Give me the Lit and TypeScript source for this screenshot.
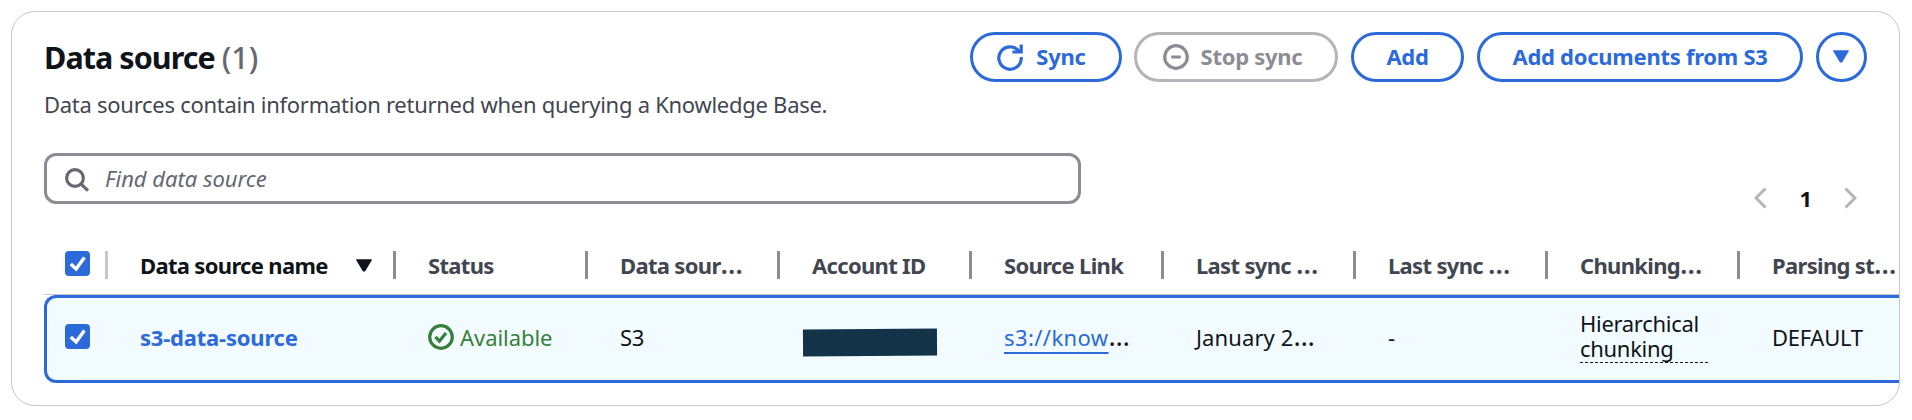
import { LitElement, html, css, svg, nothing } from "lit";
import { customElement, property } from "lit/decorators.js";

const shapes: Record<string, unknown> = {
  sync: svg`<path d="M22.6 8.2A11.2 11.2 0 1 0 24.2 13" /><path d="M24.2 .5V8h-8.8" />`,
  stop: svg`<circle cx="13" cy="13" r="11.3" /><path d="M8.2 13h9.6" />`,
  search: svg`<circle cx="10" cy="10" r="8.4" /><path d="M15.8 15.8l7.2 6.8" />`,
  ok: svg`<circle cx="13" cy="13" r="11.3" /><path d="M7.4 12.8l4 4.2 6.6-8" />`,
};

@customElement("ds-icon")
export class DsIcon extends LitElement {
  static styles = css`
    :host { display: block; flex: none; width: 26px; height: 26px; }
    svg { display: block; fill: none; stroke: currentColor; stroke-width: 3.2; overflow: visible; }
  `;
  @property() name = "";
  render() {
    return html`<svg width="26" height="26" viewBox="0 0 26 26">${shapes[this.name]}</svg>`;
  }
}

@customElement("ds-caret")
export class DsCaret extends LitElement {
  static styles = css`
    :host { display: block; flex: none; }
    svg { display: block; fill: currentColor; stroke: currentColor; stroke-width: 1.5; stroke-linejoin: round; }
  `;
  render() {
    return html`<svg width="16" height="13" viewBox="0 0 16 13"><path d="M.9 .9h14.2L9 11.2q-1 1.2-2 0z" /></svg>`;
  }
}

@customElement("ds-check")
export class DsCheck extends LitElement {
  static styles = css`
    :host { display: block; width: 25px; height: 25px; border-radius: 4px; background: #2c6ada; }
    svg { display: block; fill: none; stroke: #fff; stroke-width: 3.4; }
  `;
  render() {
    return html`<svg width="25" height="25" viewBox="0 0 25 25"><path d="M5.8 13l5.3 5L19.4 6.6" /></svg>`;
  }
}

interface Header { text: string; cut: boolean }
const headers: Header[] = [
  { text: "Status", cut: false },
  { text: "Data sour", cut: true },
  { text: "Account ID", cut: false },
  { text: "Source Link", cut: false },
  { text: "Last sync ", cut: true },
  { text: "Last sync ", cut: true },
  { text: "Chunking", cut: true },
  { text: "Parsing st", cut: true },
];

@customElement("app-root")
export class AppRoot extends LitElement {
  static styles = css`
    :host { display: block; height: 420px; box-sizing: border-box; padding: 11px 12px 14px 11px; background: #fff;
      font: 22px/30px "Noto Sans", sans-serif; color: #0f141a; white-space: nowrap; overflow: hidden; }
    .card { box-sizing: border-box; height: 395px; border: 1px solid #c6c6cd; border-radius: 24px; overflow: hidden; padding-left: 32px; }
    .head { display: flex; justify-content: space-between; padding: 20px 32px 0 0; height: 121px; }
    .title { margin: 5px 0 12px; font-size: 30.5px; line-height: 40px; font-weight: 700; letter-spacing: -0.95px; }
    .count { font-weight: 500; color: #656871; letter-spacing: 0; }
    .desc { margin: 0; color: #424650; letter-spacing: -0.27px; }
    .actions { display: flex; align-items: flex-start; }
    .btn { box-sizing: border-box; height: 50px; display: flex; align-items: center; justify-content: center;
      border: 3px solid #2c6ada; border-radius: 25px; color: #2c6ada; font-weight: 700; letter-spacing: -0.27px; }
    .label { margin-top: -2px; }
    .sync { width: 152px; gap: 13px; padding-right: 9px; margin-right: 12px; }
    .halt { width: 204px; gap: 12px; padding-right: 7px; margin-right: 13px; border-color: #b4b4bb; color: #8c8c94; }
    .add { width: 113px; margin-right: 13px; }
    .docs { width: 326px; margin-right: 13px; }
    .more { width: 51px; }
    .more ds-caret { margin: 0 2px 1px 0; }
    .tools { display: flex; justify-content: space-between; height: 83px; }
    .search { box-sizing: border-box; width: 1037px; height: 51px; border: 3px solid #8c8c94; border-radius: 12px;
      display: flex; align-items: center; gap: 14px; padding-left: 18px; color: #656871; }
    .hint { font-style: italic; letter-spacing: -0.02px; margin-top: -1px; }
    .glass { margin-top: 4px; }
    .pages { display: flex; align-items: center; gap: 32px; height: 30px; padding: 30px 42px 0 0; font-weight: 700; }
    .pages svg { display: block; fill: none; stroke: #b4b4bb; stroke-width: 3; margin-top: -1px; }
    .grid { display: grid; grid-template-columns: 64px 288px repeat(8, 192px); width: 1888px; }
    .thead { height: 58px; border-bottom: 1px solid #c6c6cd; }
    .th { display: flex; align-items: center; justify-content: space-between; font-weight: 700; color: #424650;
      letter-spacing: -0.68px; padding-left: 32px; white-space: pre; }
    .th.pick, .row .pick { padding-left: 21px; }
    .th.pick ds-check { margin-top: -3px; }
    .text { margin-top: -1px; }
    .name { color: #0f141a; }
    .name ds-caret { margin: 0 21px 0 auto; }
    .bar { width: 3px; height: 28px; background: #8c8c94; }
    .pick .bar { background: #c6c6cd; }
    .more-text { font-size: 27px; line-height: 0; font-weight: 400; letter-spacing: 0; }
    .th .more-text { font-weight: 600; }
    .row { box-sizing: border-box; height: 88px; border: 3px solid #2c6ada; border-right: 0; border-radius: 12px 0 0 12px;
      background: #f2fbff; grid-template-columns: 61px 288px repeat(8, 192px); }
    .td { display: flex; align-items: center; padding: 0 0 4px 32px; letter-spacing: -0.3px; }
    .row .pick { padding: 0 0 5px 18px; }
    .id { color: #2c6ada; font-weight: 700; letter-spacing: -0.2px; }
    .ok { color: #37803a; gap: 6px; letter-spacing: -0.05px; }
    .date { letter-spacing: 0.1px; }
    .mask { width: 134px; height: 27px; margin: 11px 0 0 -9px; background: #133448; transform: rotate(-0.4deg); }
    .link { color: #2c6ada; letter-spacing: 0.4px; text-decoration: underline 2px; text-underline-offset: 6px; text-decoration-skip-ink: none; }
    .chunk { width: 128px; line-height: 25px; border-bottom: 1px dashed #0f141a; white-space: normal; padding-bottom: 1px; }
  `;
  private dots = html`<span class="more-text">…</span>`;
  render() {
    return html`<section class="card">
      <header class="head">
        <div>
          <h2 class="title">Data source <span class="count">(1)</span></h2>
          <p class="desc">Data sources contain information returned when querying a Knowledge Base.</p>
        </div>
        <div class="actions">
          <div class="btn sync"><ds-icon name="sync"></ds-icon><span class="label">Sync</span></div>
          <div class="btn halt"><ds-icon name="stop"></ds-icon><span class="label">Stop sync</span></div>
          <div class="btn add"><span class="label">Add</span></div>
          <div class="btn docs"><span class="label">Add documents from S3</span></div>
          <div class="btn more"><ds-caret></ds-caret></div>
        </div>
      </header>
      <div class="tools">
        <div class="search"><ds-icon class="glass" name="search"></ds-icon><span class="hint">Find data source</span></div>
        <div class="pages">
          <svg width="13" height="22" viewBox="0 0 13 22"><path d="M11.5 1.5L2 11l9.5 9.5" /></svg>
          <span>1</span>
          <svg width="13" height="22" viewBox="0 0 13 22"><path d="M1.5 1.5L11 11l-9.5 9.5" /></svg>
        </div>
      </div>
      <div class="grid thead">
        <div class="th pick"><ds-check></ds-check><span class="bar"></span></div>
        <div class="th name"><span class="text">Data source name</span><ds-caret></ds-caret><span class="bar"></span></div>
        ${headers.map((h, i) => html`<div class="th"><span class="text">${h.text}${h.cut ? this.dots : nothing}</span>${i < headers.length - 1 ? html`<span class="bar"></span>` : nothing}</div>`)}
      </div>
      <div class="grid row">
        <div class="td pick"><ds-check></ds-check></div>
        <div class="td id">s3-data-source</div>
        <div class="td ok"><ds-icon name="ok"></ds-icon><span>Available</span></div>
        <div class="td">S3</div>
        <div class="td"><div class="mask"></div></div>
        <div class="td"><span><span class="link">s3://know</span>${this.dots}</span></div>
        <div class="td date"><span>January 2${this.dots}</span></div>
        <div class="td">-</div>
        <div class="td"><div class="chunk">Hierarchical chunking</div></div>
        <div class="td">DEFAULT</div>
      </div>
    </section>`;
  }
}
